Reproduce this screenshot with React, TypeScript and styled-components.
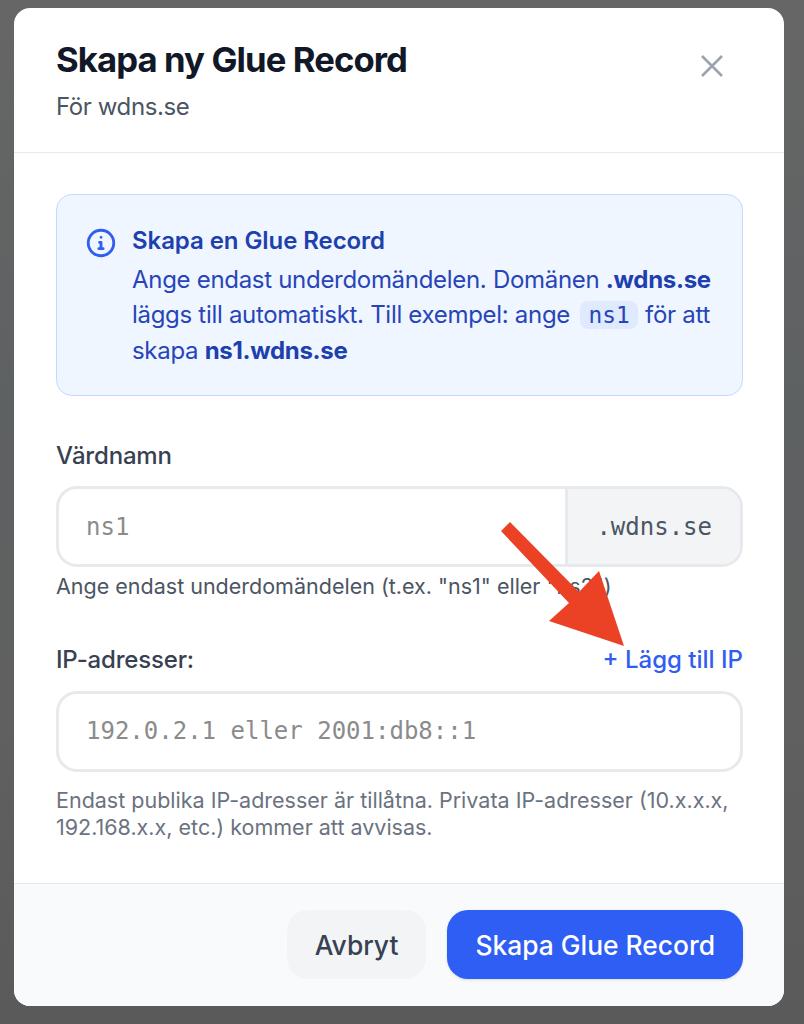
import React from 'react';
import styled, { createGlobalStyle } from 'styled-components';

const GlobalStyle = createGlobalStyle`
  html, body {
    margin: 0;
    padding: 0;
    height: 100%;
  }
  body {
    font-family: Inter, "Liberation Sans", sans-serif;
    background: #5f6060;
  }
`;

const Overlay = styled.div`
  position: relative;
  width: 804px;
  height: 1024px;
  padding: 8px 20px 18px 14px;
  box-sizing: border-box;
  overflow: hidden;
  background: linear-gradient(180deg, #666666 0%, #5e6162 40%, #606060 70%, #5a5a5a 100%);
`;

const Modal = styled.div`
  display: flex;
  flex-direction: column;
  height: 998px;
  background: #ffffff;
  border-radius: 16px;
  overflow: hidden;
`;

const Header = styled.header`
  display: flex;
  justify-content: space-between;
  align-items: flex-start;
  height: 145px;
  padding: 30px 42px 0;
  box-sizing: border-box;
  border-bottom: 1px solid #e8e9eb;
`;

const Title = styled.h1`
  margin: 0;
  font-size: 34.67px;
  line-height: 42px;
  font-weight: 700;
  letter-spacing: -0.9px;
  color: #111827;
`;

const Subtitle = styled.p`
  margin: 11px 0 0;
  font-size: 24px;
  line-height: 32px;
  letter-spacing: -0.4px;
  color: #4b5563;
`;

const CloseButton = styled.button`
  display: flex;
  margin: 12px 14px 0 0;
  padding: 0;
  border: 0;
  background: none;
  color: #9ca3af;
`;

const Body = styled.div`
  flex: 1;
  padding: 41px 41px 0 42px;
`;

const Notice = styled.div`
  display: flex;
  gap: 14px;
  height: 202px;
  padding: 29px 30px 0 27px;
  box-sizing: border-box;
  background: #eff6ff;
  border: 1px solid #bfdbfe;
  border-radius: 16px;
`;

const NoticeIcon = styled.svg`
  flex: none;
  margin-top: 2px;
  color: #2f5ef0;
`;

const NoticeTitle = styled.h3`
  margin: 0;
  font-size: 24px;
  line-height: 34px;
  font-weight: 600;
  letter-spacing: -0.07px;
  color: #1e40af;
`;

const NoticeText = styled.p`
  margin: 4px 0 0;
  font-size: 24px;
  line-height: 35px;
  letter-spacing: -0.3px;
  color: #2745b8;

  strong {
    font-weight: 700;
    color: #1e40af;
  }
`;

const Code = styled.code`
  margin: 0 1px 0 4px;
  padding: 1px 8px;
  font-family: "DejaVu Sans Mono", monospace;
  font-size: 22.8px;
  letter-spacing: 0;
  background: #dfeafe;
  border-radius: 8px;
`;

const Field = styled.div`
  margin-top: 43px;
`;

const LabelRow = styled.div`
  display: flex;
  justify-content: space-between;
  align-items: center;
  height: 32px;
  margin-bottom: 15px;
`;

const Label = styled.label`
  font-size: 24px;
  font-weight: 500;
  letter-spacing: -0.18px;
  color: #374151;
`;

const AddLink = styled.a`
  font-size: 24px;
  font-weight: 500;
  color: #2f5ef0;
`;

const InputGroup = styled.div`
  display: flex;
  height: 81px;
  box-sizing: border-box;
  border: 3px solid #e8e9ed;
  border-radius: 21px;
  overflow: hidden;
`;

const Placeholder = styled.div`
  flex: 1;
  display: flex;
  align-items: center;
  padding-left: 27px;
  font-family: "DejaVu Sans Mono", monospace;
  font-size: 24px;
  color: #8b8b8b;
`;

const Suffix = styled.div`
  display: flex;
  align-items: center;
  padding: 0 28px;
  background: #f3f4f6;
  border-left: 3px solid #e8e9ed;
  font-family: "DejaVu Sans Mono", monospace;
  font-size: 24px;
  color: #4b5563;
`;

const Hint = styled.p`
  margin: 15px 0 0;
  font-size: 21.5px;
  line-height: 27.5px;
  color: #6b7280;
`;

const DarkHint = styled(Hint)`
  margin-top: 6px;
  color: #4b5563;
`;

const Footer = styled.footer`
  display: flex;
  justify-content: flex-end;
  gap: 21px;
  height: 123px;
  padding: 26px 41px 0 0;
  box-sizing: border-box;
  background: #f9fafb;
  border-top: 1px solid #e5e7eb;
`;

const Button = styled.button<{ $primary?: boolean }>`
  height: 69px;
  padding: 0 28px;
  border: 0;
  border-radius: 21px;
  font-family: inherit;
  font-size: 26.4px;
  font-weight: 500;
  color: ${(p) => (p.$primary ? '#ffffff' : '#374151')};
  background: ${(p) => (p.$primary ? '#2f5ef5' : '#f3f4f6')};
  box-shadow: ${(p) => (p.$primary ? '0 1px 3px rgba(0, 0, 0, 0.12)' : 'none')};
`;

const Arrow = styled.svg`
  position: absolute;
  left: 0;
  top: 0;
  pointer-events: none;
`;

export default function App() {
  return (
    <Overlay>
      <GlobalStyle />
      <Modal>
        <Header>
          <div>
            <Title>Skapa ny Glue Record</Title>
            <Subtitle>För wdns.se</Subtitle>
          </div>
          <CloseButton aria-label="Stäng">
            <svg width="32" height="32" viewBox="0 0 32 32" fill="none" stroke="currentColor" strokeWidth="2.6">
              <path d="M6 6l20 20M26 6L6 26" />
            </svg>
          </CloseButton>
        </Header>

        <Body>
          <Notice>
            <NoticeIcon width="34" height="34" viewBox="0 0 24 24" fill="none" stroke="currentColor" strokeWidth="2" strokeLinecap="round" strokeLinejoin="round">
              <circle cx="12" cy="12" r="9" />
              <path d="M11 11.5h1v4.5M10.5 16h3M12 8h.01" />
            </NoticeIcon>
            <div>
              <NoticeTitle>Skapa en Glue Record</NoticeTitle>
              <NoticeText>
                Ange endast underdomändelen. Domänen <strong>.wdns.se</strong> läggs till automatiskt. Till exempel: ange <Code>ns1</Code> för att skapa <strong>ns1.wdns.se</strong>
              </NoticeText>
            </div>
          </Notice>

          <Field>
            <LabelRow>
              <Label>Värdnamn</Label>
            </LabelRow>
            <InputGroup>
              <Placeholder>ns1</Placeholder>
              <Suffix>.wdns.se</Suffix>
            </InputGroup>
            <DarkHint>Ange endast underdomändelen (t.ex. "ns1" eller "ns2")</DarkHint>
          </Field>

          <Field>
            <LabelRow>
              <Label>IP-adresser:</Label>
              <AddLink>+ Lägg till IP</AddLink>
            </LabelRow>
            <InputGroup>
              <Placeholder>192.0.2.1 eller 2001:db8::1</Placeholder>
            </InputGroup>
            <Hint>Endast publika IP-adresser är tillåtna. Privata IP-adresser (10.x.x.x, 192.168.x.x, etc.) kommer att avvisas.</Hint>
          </Field>
        </Body>

        <Footer>
          <Button>Avbryt</Button>
          <Button $primary>Skapa Glue Record</Button>
        </Footer>
      </Modal>

      <Arrow width="804" height="1024" viewBox="0 0 804 1024">
        <polygon points="501,531 510,522 579,592 599,571 624,646 549,621 569,603" fill="#eb4125" />
      </Arrow>
    </Overlay>
  );
}
